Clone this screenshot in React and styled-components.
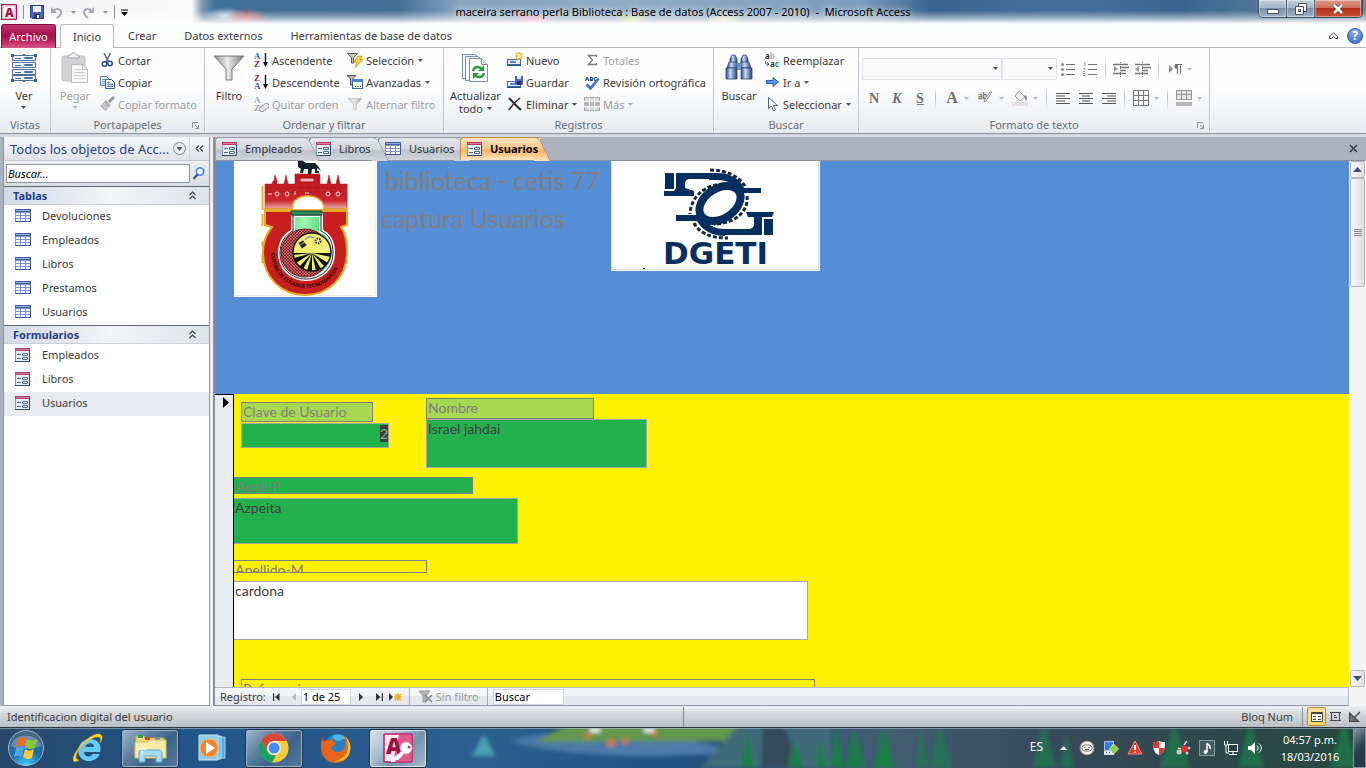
import React, { useEffect, useRef, useState } from "react";
import styled, { createGlobalStyle, css } from "styled-components";

const GlobalStyle = createGlobalStyle`
  * { box-sizing: border-box; }
  html, body { margin: 0; height: 100%; overflow: hidden; }
  body { font-family: "Noto Sans", "Open Sans", sans-serif; font-size: 11px; color: #3b3b3b; }
  button, input, select, textarea { font: inherit; color: inherit; margin: 0; }
  button { background: none; border: 0; padding: 0; cursor: default; }
  svg { display: block; flex: none; }
`;

const Window = styled.div`
  display: flex;
  flex-direction: column;
  height: 100vh;
  background: #abb2be;
`;

/* ---------- title bar ---------- */

const TitleBar = styled.header`
  display: grid;
  grid-template-columns: 1fr auto 1fr;
  height: 24px;
  background:
    linear-gradient(rgba(255, 255, 255, 0) 45%, rgba(255, 255, 255, 0.45) 75%, #fff 100%),
    radial-gradient(ellipse 22px 10px at 247px 18px, #e0706c, transparent),
    radial-gradient(ellipse 22px 9px at 225px 16px, #cfd9e6, transparent),
    radial-gradient(ellipse 24px 9px at 534px 20px, #ee8fb4, transparent),
    radial-gradient(ellipse 18px 8px at 632px 20px, #cfe07a, transparent),
    radial-gradient(ellipse 20px 8px at 724px 20px, #efe9b4, transparent),
    linear-gradient(90deg, #f1f2f4 0, #fafafa 192px, #7f9ab5 202px, #40709a 215px, #466f96 400px,
      #88a5c0 460px, #8fabc5 640px, #7d9dbc 860px, #39658f 930px, #44709a 1060px, #3a6690 1180px, #6f8aa5 1366px);
`;

const QuickAccess = styled.div`
  display: flex;
  align-items: center;
  gap: 6px;
  padding-left: 1px;
`;

const QuickButton = styled.button`
  display: flex;
  align-items: center;
  gap: 8px;
`;

const ThinRule = styled.span`
  width: 1px;
  height: 14px;
  background: #8d929b;
`;

const WindowTitle = styled.h1`
  margin: 0;
  font-size: 11px;
  font-weight: 400;
  line-height: 24px;
  color: #000;
  white-space: pre;
  text-shadow: 0 0 6px #ffffffc0, 0 0 8px #ffffffa0;
`;

const Caption = styled.div`
  display: flex;
  justify-self: end;
  height: 18px;
  margin-right: 3px;
  border: 1px solid #3d4e60;
  border-top: 0;
  border-radius: 0 0 5px 5px;
  overflow: hidden;
`;

const CaptionButton = styled.button`
  display: grid;
  place-items: center;
  width: ${(p) => (p.$close ? 47 : 28)}px;
  border-right: 1px solid #4b5e72;
  background: ${(p) =>
    p.$close
      ? "linear-gradient(#dd9c8c 0, #cf6f58 45%, #b62f18 50%, #cc5232 100%)"
      : "linear-gradient(#c3cfdb 0, #a7b7c8 45%, #7b90a6 50%, #a4b6c8 100%)"};
  box-shadow: inset 0 0 0 1px #ffffff60;
`;

/* ---------- ribbon ---------- */

const TabStrip = styled.nav`
  display: flex;
  height: 24px;
  padding-left: 1px;
  background: linear-gradient(#fbfcfd, #fff);
  border-bottom: 1px solid #b4b8bf;
`;

const RibbonTab = styled.button`
  height: 24px;
  padding: 0 14px;
  line-height: 21px;
  ${(p) =>
    p.$kind === "file" &&
    css`
      width: 55px;
      padding: 0;
      margin-right: 4px;
      color: #fff;
      border: 1px solid #8a0a3c;
      border-bottom: 0;
      border-radius: 3px 3px 0 0;
      background: linear-gradient(#b8386c 0, #a80c4c 45%, #b5124f 60%, #d6588a 100%);
    `}
  ${(p) =>
    p.$kind === "active" &&
    css`
      width: 54px;
      padding: 0;
      background: #fff;
      border: 1px solid #b4b8bf;
      border-bottom: 0;
      border-radius: 3px 3px 0 0;
    `}
`;

const TabText = styled.span`
  display: block;
  height: 22px;
`;

const StripEnd = styled.div`
  display: flex;
  align-items: center;
  gap: 9px;
  margin-left: auto;
  padding-right: 3px;
`;

const HelpButton = styled.button`
  width: 16px;
  height: 16px;
  border-radius: 50%;
  border: 1px solid #2c5db0;
  background: radial-gradient(circle at 50% 25%, #8db4ef, #2f63c4);
  color: #fff;
  font-size: 12px;
  font-weight: 700;
  line-height: 13px;
`;

const Ribbon = styled.section`
  display: flex;
  height: 86px;
  background: linear-gradient(#fff 0, #fdfdfe 45%, #f0f2f5 80%, #e6e9ee 100%);
  border-bottom: 1px solid #8d939e;
`;

const Group = styled.div`
  display: flex;
  flex-direction: column;
  padding: 1px 2px 0;
  width: ${(p) => p.$width}px;
  border-right: 1px solid #c3c7ce;
  box-shadow: 1px 0 0 #fff;
`;

const GroupBody = styled.div`
  display: flex;
  height: 67px;
`;

const GroupFooter = styled.div`
  position: relative;
  line-height: 17px;
  text-align: center;
  color: #686d7c;
`;

const Launcher = styled.button`
  position: absolute;
  right: 3px;
  top: 6px;
`;

const LargeButton = styled.button`
  display: flex;
  flex-direction: column;
  align-items: center;
  gap: 5px;
  width: ${(p) => p.$width || 44}px;
  padding-top: 3px;
  line-height: 13px;
  color: ${(p) => (p.disabled ? "#a0a0a0" : "inherit")};
`;

const LargeLabel = styled.span`
  display: flex;
  flex-direction: column;
  align-items: center;
  gap: ${(p) => (p.$arrow ? 4 : 0)}px;
`;

const SmallButton = styled.button`
  display: flex;
  align-items: center;
  gap: 3px;
  height: 22px;
  padding-left: 2px;
  white-space: nowrap;
  color: ${(p) => (p.disabled ? "#a0a0a0" : "inherit")};
`;

const SmallLabel = styled.span`
  display: flex;
  align-items: center;
  gap: 4px;
`;

const Column = styled.div`
  width: ${(p) => (p.$width ? p.$width + "px" : "auto")};
`;

const FormatTools = styled.div`
  padding: 2px 0 0 1px;
`;

const FormatRow = styled.div`
  display: flex;
  align-items: center;
  height: ${(p) => p.$height}px;
`;

const ComboBox = styled.span`
  position: relative;
  width: ${(p) => p.$width}px;
  svg { position: absolute; right: 4px; top: 9px; }
`;

const ComboSelect = styled.select`
  display: block;
  appearance: none;
  width: 100%;
  height: 22px;
  border: 1px solid #dfe2e8;
  background: #fafafa;
  opacity: 1;
`;

const FormatButton = styled.button`
  display: flex;
  align-items: center;
  justify-content: center;
  gap: 5px;
  width: ${(p) => p.$width || 23}px;
  height: 22px;
`;

const FormatRule = styled.span`
  width: 1px;
  height: 20px;
  margin: 0 4px;
  background: linear-gradient(#eee, #b9bec8, #eee);
`;

/* ---------- work area ---------- */

const WorkArea = styled.main`
  flex: 1;
  display: flex;
  min-height: 0;
  padding-left: 3px;
  border-top: 3px solid #d5d8de;
`;

const NavPane = styled.aside`
  width: 207px;
  flex: none;
  background: #fff;
  border: 1px solid #8f959f;
  border-width: 0 1px 1px 1px;
`;

const NavHeader = styled.div`
  display: flex;
  align-items: center;
  height: 24px;
  padding-left: 6px;
  color: #1f4290;
  white-space: nowrap;
  background: linear-gradient(#f7f8fa, #dfe3e9);
  border-bottom: 1px solid #c5cad2;
`;

const NavTitle = styled.h2`
  margin: 0;
  flex: 1;
  font-size: 13px;
  font-weight: 400;
`;

const NavToggle = styled.button`
  display: grid;
  place-items: center;
  width: 20px;
  height: 22px;
  border-left: ${(p) => (p.$ruled ? "1px solid #d5d9df" : "0")};
`;

const NavSearch = styled.div`
  display: flex;
  align-items: center;
  gap: 2px;
  height: 25px;
  padding: 0 4px 0 2px;
  background: linear-gradient(#eef0f3, #d9dde3);
`;

const SearchInput = styled.input`
  flex: 1;
  min-width: 0;
  height: 19px;
  padding: 0 1px;
  border: 1px solid #8f959f;
  background: #fff;
  font-style: italic;
  &::placeholder { color: #000; opacity: 1; }
`;

const NavGroupHeader = styled.button`
  display: flex;
  align-items: center;
  justify-content: space-between;
  width: 100%;
  height: 19px;
  padding: 0 12px 0 9px;
  border-top: 1px solid #62666e;
  border-bottom: 1px solid #ccd1da;
  background: linear-gradient(90deg, #d3d9e6, #f3f4f5 52%, #dfe3eb);
  font-weight: 700;
  color: #1f4290;
`;

const NavList = styled.ul`
  list-style: none;
  margin: 0;
  padding: 0;
`;

const NavItem = styled.a`
  display: grid;
  grid-template-columns: 27px 1fr;
  align-items: center;
  height: 24px;
  padding: 0 0 3px 11px;
  color: inherit;
  text-decoration: none;
  background: ${(p) => (p.$selected ? "#e8ebef" : "transparent")};
`;

const Splitter = styled.div`
  width: 5px;
  flex: none;
  background: linear-gradient(90deg, #eceef2 3px, #8a9099 3px);
`;

const Document = styled.section`
  flex: 1;
  display: flex;
  flex-direction: column;
  min-width: 0;
`;

const DocTabs = styled.div`
  display: flex;
  align-items: flex-end;
  height: 24px;
  border-bottom: 1px solid #8b919b;
`;

const DocTab = styled.button`
  position: relative;
  z-index: ${(p) => (p.$active ? 5 : p.$order)};
  display: flex;
  align-items: center;
  gap: 8px;
  width: ${(p) => p.$width}px;
  height: 23px;
  padding: 0 0 1px 6px;
  border: 1px solid ${(p) => (p.$active ? "#c18a4b" : "#9299a4")};
  border-width: 1px 0 0 1px;
  border-radius: 4px 0 0 0;
  font-weight: ${(p) => (p.$active ? 700 : 400)};
  color: ${(p) => (p.$active ? "#000" : "#333")};
  --fill: ${(p) =>
    p.$active
      ? "linear-gradient(#fde3c2 0, #fbc98c 45%, #f8b25c 55%, #fde6c6 100%)"
      : "linear-gradient(#e3e6ea 0, #d3d7dc 50%, #bec4cc 55%, #cfd4da 100%)"};
  background: var(--fill);
  &::after {
    content: "";
    position: absolute;
    z-index: -1;
    top: -1px;
    right: -5px;
    width: 16px;
    height: 23px;
    background: var(--fill);
    border: 1px solid ${(p) => (p.$active ? "#c18a4b" : "#9299a4")};
    border-width: 1px 1px 0 0;
    border-radius: 0 6px 0 0;
    transform: skewX(26deg);
  }
`;

const CloseDocument = styled.button`
  margin: 0 8px 7px auto;
`;

const FormView = styled.div`
  flex: 1;
  display: flex;
  min-height: 0;
`;

const FormColumn = styled.div`
  flex: 1;
  display: flex;
  flex-direction: column;
  min-width: 0;
`;

const FormHeader = styled.div`
  display: flex;
  align-items: flex-start;
  height: 233px;
  flex: none;
  padding-left: 19px;
  background: #558ed5;
`;

const FormTitles = styled.div`
  width: 234px;
  padding-left: 4px;
  font-family: Lato, sans-serif;
  font-size: 25px;
  line-height: 38px;
  color: #7f7f7f;
  white-space: nowrap;
`;

const FormTitle = styled.div`
  padding-left: ${(p) => (p.$indent ? 4 : 0)}px;
`;

const Detail = styled.div`
  flex: 1;
  display: flex;
  min-height: 0;
  overflow: hidden;
  background: #fff200;
`;

const RecordSelector = styled.div`
  width: 19px;
  flex: none;
  padding: 2px 0 0 8px;
  background: #e8ebf0;
  border: 1px solid #000;
  border-width: 1px 1px 0 0;
`;

const Fields = styled.form`
  flex: 1;
  overflow: hidden;
  font-family: Lato, sans-serif;
  font-size: 14px;
  line-height: 18px;
`;

const FieldPair = styled.div`
  display: flex;
  gap: 37px;
  padding: 4px 0 0 7px;
  margin-bottom: 9px;
`;

const Field = styled.div`
  display: flex;
  flex-direction: column;
  gap: ${(p) => p.$gap || 0}px;
  padding: ${(p) => p.$pad || "0"};
`;

const FieldLabel = styled.label`
  display: block;
  width: ${(p) => p.$width}px;
  height: ${(p) => p.$height}px;
  padding-left: 1px;
  overflow: hidden;
  color: #7f7f7f;
  background: ${(p) => p.$fill || "transparent"};
  border: 1px solid #7f7f7f;
  border-left-width: ${(p) => (p.$flush ? 0 : 1)}px;
`;

const fieldBox = css`
  display: block;
  width: ${(p) => p.$width}px;
  height: ${(p) => p.$height}px;
  padding: 0 1px;
  color: #404040;
  background: ${(p) => p.$fill || "#fff"};
  border: 1px solid #a5a5a5;
  border-left-width: ${(p) => (p.$flush ? 0 : 1)}px;
  border-radius: 0;
  outline: 0;
  resize: none;
`;

const KeyInput = styled.input`
  ${fieldBox}
  padding: 0 0 5px;
  text-align: right;
  caret-color: transparent;
  &::selection { background: #404040; color: #7fb98c; }
`;

const TextBox = styled.textarea`
  ${fieldBox}
  overflow: hidden;
`;

const ScrollBar = styled.div`
  display: flex;
  flex-direction: column;
  width: 17px;
  flex: none;
  padding: 0 0 0 1px;
  background: #f5f5f6;
`;

const ScrollButton = styled.button`
  display: grid;
  place-items: center;
  width: 15px;
  height: ${(p) => p.$height || 17}px;
  border: 1px solid #b3b6bb;
  border-radius: 2px;
  background: linear-gradient(90deg, #fafafa, #dedede);
  margin-top: ${(p) => (p.$last ? "auto" : "0")};
`;

const RecordFooter = styled.div`
  flex: none;
  padding-right: 17px;
  background: #f5f5f6;
`;

const RecordBar = styled.div`
  display: flex;
  align-items: center;
  height: 19px;
  padding-left: 5px;
  border: 1px solid #b6bac2;
  border-width: 1px 1px 1px 0;
  border-bottom-color: #8f98a6;
  background: linear-gradient(#f4f5f7 50%, #e5e8ec 50%);
`;

const RecordButton = styled.button`
  display: grid;
  place-items: center;
  width: ${(p) => p.$width || 17}px;
`;

const RecordInput = styled.input`
  width: ${(p) => p.$width}px;
  height: 16px;
  padding: 0 1px;
  border: 1px solid #d5d8dd;
  background: #fff;
  color: #000;
`;

const FilterState = styled.button`
  display: flex;
  align-items: center;
  gap: 3px;
  height: 17px;
  padding: 0 8px;
  margin: 0 5px;
  border: 1px solid #a9adb5;
  border-width: 0 1px;
  color: #9b9b9b;
`;

/* ---------- status bar ---------- */

const StatusBar = styled.footer`
  display: flex;
  align-items: center;
  height: 22px;
  flex: none;
  background: linear-gradient(#eef0f3, #d3d6da 40%, #bcc1c6);
  border-bottom: 1px solid #30363d;
`;

const StatusText = styled.span`
  width: 50%;
  padding-left: 7px;
`;

const StatusRight = styled.div`
  display: flex;
  align-items: center;
  justify-content: flex-end;
  flex: 1;
  height: 20px;
  border-left: 1px solid #7f858d;
  padding-right: 2px;
`;

const ViewRule = styled.span`
  width: 1px;
  height: 20px;
  margin: 0 4px 0 9px;
  background: #8b9098;
`;

const ViewButton = styled.button`
  display: grid;
  place-items: center;
  width: 19px;
  height: 19px;
  border-radius: 2px;
  ${(p) =>
    p.$active &&
    css`
      border: 1px solid #c28a30;
      background: linear-gradient(#fbe3a0, #fdd667);
    `}
`;

/* ---------- taskbar ---------- */

const Taskbar = styled.div`
  position: relative;
  display: flex;
  align-items: center;
  height: 40px;
  flex: none;
  overflow: hidden;
  background: #234f7e;
  color: #fff;
`;

const Scenery = styled.svg`
  position: absolute;
  inset: 0;
  width: 100%;
  height: 100%;
`;

const TaskList = styled.div`
  position: relative;
  display: flex;
  align-items: center;
  gap: 4px;
  padding-left: 7px;
`;

const StartButton = styled.button`
  width: 48px;
`;

const TaskButton = styled.button`
  display: grid;
  place-items: center;
  width: 58px;
  height: 39px;
  border-radius: 3px;
  ${(p) =>
    p.$state &&
    css`
      border: 1px solid #1b2f45;
      box-shadow: inset 0 0 0 1px ${p.$state === "active" ? "#dbe6f0" : "#9db4c9"};
      background: ${p.$state === "active"
        ? "linear-gradient(135deg, #d8e2ec 0, #a9bfd3 35%, #7592ae 60%, #a7bccf 100%)"
        : "linear-gradient(135deg, #a3b8cb 0, #5d7f9f 35%, #3c658b 60%, #56799b 100%)"};
    `}
`;

const Tray = styled.div`
  position: relative;
  display: flex;
  align-items: center;
  gap: 8px;
  margin-left: auto;
  height: 40px;
`;

const Language = styled.button`
  padding-bottom: 4px;
  margin-right: 4px;
  font-size: 12px;
`;

const TrayButton = styled.button`
  display: grid;
  place-items: center;
  width: 16px;
`;

const Clock = styled.button`
  width: 82px;
  padding-right: 4px;
  line-height: 17px;
`;

const ShowDesktop = styled.button`
  width: 13px;
  height: 40px;
  margin-left: -8px;
  border: 1px solid #8796a3;
  background: linear-gradient(135deg, #8296a3, #2b3f4d 50%, #22343f);
`;

/* ---------- drawings ---------- */

const Svg = ({ w = 16, h = 16, box, children }) => (
  <svg width={w} height={h} viewBox={box || `0 0 ${w} ${h}`} fill="none" aria-hidden="true">
    {children}
  </svg>
);

const Arrow = ({ color = "#555" }) => (
  <Svg w={5} h={3}>
    <path d="M0 0h5L2.500 3z" fill={color} />
  </Svg>
);

const FormIcon = () => (
  <Svg w={15} h={14}>
    <rect x=".5" y=".5" width="14" height="13" fill="#e9eff8" stroke="#8296b8" />
    <path d="M0 0h15v3H0z" fill="#b93a6b" />
    <path d="M1 1.500h13" stroke="#d77a9d" />
    <path d="M14.500 3v10.500H0" stroke="#2c4a6e" />
    <path d="M2 6.500h4M2 10.500h4" stroke="#4a6792" />
    <path d="M7.500 5.500h5v2h-5zM7.500 9.500h5v2h-5z" stroke="#4a6792" fill="#fff" />
  </Svg>
);

const TableIcon = () => (
  <Svg w={16} h={13}>
    <rect width="16" height="13" fill="#7d97c3" />
    <path d="M0 0h16v3H0z" fill="#4468a6" />
    <path d="M1 4h4v2H1zM6 4h4v2H6zM11 4h4v2h-4zM1 7h4v2H1zM6 7h4v2H6zM11 7h4v2h-4zM1 10h4v2H1zM6 10h4v2H6zM11 10h4v2h-4z" fill="#f4f7fc" />
    <path d="M1 1.500h14" stroke="#8eabd8" />
    <path d="M15.500 2v10.500H0" stroke="#3d5788" />
  </Svg>
);

const AccessMark = () => (
  <Svg w={16} h={16}>
    <rect x=".5" y=".5" width="15" height="15" rx="1" fill="#fbeef3" stroke="#a51d50" strokeWidth="1.500" />
    <rect x="2" y="2" width="12" height="12" fill="#fff" stroke="#e7a9c1" />
    <text x="4" y="13" fontSize="12" fontWeight="900" fill="#a3124a">A</text>
  </Svg>
);

const SaveIcon = () => (
  <Svg w={14} h={14}>
    <path d="M.5.5h13v13H2L.500 12z" fill="#4a63c0" stroke="#2b3e8e" />
    <path d="M3 1h8v6H3z" fill="#e8eefb" />
    <path d="M4 9h6v5H4z" fill="#28367a" />
    <path d="M7 10h2v3H7z" fill="#fff" />
  </Svg>
);

const UndoIcon = ({ flip }) => (
  <Svg w={13} h={13}>
    <g transform={flip ? "matrix(-1 0 0 1 13 0)" : undefined}>
      <path d="M1 1v6h6z" fill="#a3a9b3" />
      <path d="M3.500 5C6 2 11 2.500 11 6.500c0 2.500-2 4-4 5.500" stroke="#a3a9b3" strokeWidth="2" />
    </g>
  </Svg>
);

const ViewFormIcon = () => (
  <Svg w={32} h={32} box="-2 -1 32 32">
    <g fill="#eef3fa" stroke="#4d6b9b">
      <path d="M2.500 2.500h23v5h-23zM2.500 9.500h23v5h-23zM2.500 16.500h23v5h-23zM2.500 22.500h23v5h-23z" />
      <path d="M14.500 4.500h8v1h-8zM14.500 11.500h8v1h-8zM14.500 18.500h8v1h-8zM14.500 24.500h8v1h-8z" fill="#fff" />
      <path d="M5 5.500h6M5 12.500h6M5 19.500h6M5 25.500h6" />
    </g>
    <path d="M1 1h3v3H1zM24 1h3v3h-3zM1 26h3v3H1zM24 26h3v3h-3zM13 1h2v2h-2zM13 27h2v2h-2z" fill="#3d5f97" />
  </Svg>
);

const PasteIcon = () => (
  <Svg w={28} h={32}>
    <rect x="1" y="4" width="23" height="25" rx="2" fill="#d3d3d6" stroke="#c2c2c6" />
    <path d="M7 6V4c0-1 1-1 3-1 0-3 5-3 5 0 2 0 3 0 3 1v2z" fill="#f2f2f2" stroke="#a8a8ac" />
    <path d="M10.500 12.500h11l5 5v13h-16z" fill="#f6f6f7" stroke="#bdbdc2" />
    <path d="M21.500 12.500v5h5" stroke="#bdbdc2" />
    <path d="M13 17.500h7M13 20.500h11M13 23.500h11M13 26.500h11" stroke="#d0d0d4" />
  </Svg>
);

const CutIcon = () => (
  <Svg>
    <path d="M5 1l4.500 9M11.500 1L7 10" stroke="#5b6b85" strokeWidth="1.600" />
    <circle cx="5.500" cy="12" r="2.300" stroke="#2b4fa0" strokeWidth="1.600" />
    <circle cx="11" cy="11.500" r="2.200" stroke="#2b4fa0" strokeWidth="1.600" />
  </Svg>
);

const CopyIcon = () => (
  <Svg>
    <path d="M1.500 2.500h6l2 2v7h-8z" fill="#f1f5fc" stroke="#5b7cb8" />
    <path d="M3 5.500h4M3 7.500h4M3 9.500h3" stroke="#7f9bd0" />
    <path d="M6.500 5.500h6l3 3v6h-9z" fill="#e7effc" stroke="#385fa8" />
    <path d="M8 8.500h3M8 10.500h6M8 12.500h6" stroke="#4f76bf" />
  </Svg>
);

const BrushIcon = () => (
  <Svg>
    <path d="M15 1l-5 5" stroke="#9a9a9a" strokeWidth="3" />
    <path d="M7 4l5 5-2 2-5-5zM5 6l5 5-3 4-6-5z" fill="#b3b3b3" />
    <path d="M3 8l4 5M5 7l4 5" stroke="#e0e0e0" />
  </Svg>
);

const Funnel = ({ w = 16, h = 16, dim }) => (
  <Svg w={w} h={h} box="0 0 32 30">
    <defs>
      <linearGradient id={dim ? "funnelDim" : "funnel"}>
        <stop offset="0" stopColor={dim ? "#c5c5c5" : "#8a8a8a"} />
        <stop offset=".45" stopColor="#ececec" />
        <stop offset="1" stopColor={dim ? "#999" : "#777"} />
      </linearGradient>
    </defs>
    <path d="M1 3h30L19 16v11h-6V16z" fill={`url(#${dim ? "funnelDim" : "funnel"})`} stroke={dim ? "#aaa" : "#7a7a7a"} />
  </Svg>
);

const SortIcon = ({ top, bottom, topFill, bottomFill }) => (
  <Svg>
    <g fontFamily="Liberation Serif, serif" fontWeight="700" fontSize="9">
      <text x="1" y="7" fill={topFill}>{top}</text>
      <text x="1" y="15" fill={bottomFill}>{bottom}</text>
    </g>
    <path d="M12.500 1v10" stroke="#111" strokeWidth="1.400" />
    <path d="M10 10h5l-2.500 5z" fill="#111" />
  </Svg>
);

const ClearSortIcon = () => (
  <Svg>
    <g fontFamily="Liberation Serif, serif" fontWeight="700" fontSize="9" fill="#a6a6a6">
      <text x="1" y="7">A</text>
      <text x="1" y="15">Z</text>
    </g>
    <rect x="6" y="9" width="10" height="5" rx="2" transform="rotate(-35 11 11)" fill="#eee" stroke="#9f9f9f" />
  </Svg>
);

const SelectionIcon = () => (
  <Svg>
    <path d="M.500 1.500h10L6.500 6v5h-2V6z" fill="#c9c9c9" stroke="#555" />
    <path d="M11 4h4l-2 3.500h3l-8 8 2-5.500H7z" fill="#ffd23c" stroke="#d88a13" strokeWidth=".800" />
  </Svg>
);

const AdvancedIcon = () => (
  <Svg>
    <path d="M0 1.500h9L5.500 5v6h-2V5z" fill="#b9b9b9" stroke="#555" />
    <rect x="5.500" y="5.500" width="10" height="9" fill="#fff" stroke="#3a68b5" />
    <path d="M5 5h11v3H5z" fill="#4a80d0" />
    <path d="M8 12.500h1M10.500 12.500h1M13 12.500h1" stroke="#333" />
  </Svg>
);

const RefreshIcon = () => (
  <Svg w={32} h={32} box="-1 -1 32 32">
    <g fill="#f6f8fc" stroke="#7d8fae">
      <path d="M1.500 1.500h13l4 4v20h-17z" />
      <path d="M4.500 3.500h13l4 4v20h-17z" />
      <path d="M8.500 5.500h12l6 6v17h-18z" fill="#fff" />
    </g>
    <path d="M20.500 5.500v6h6" stroke="#7d8fae" fill="#dfe6f2" />
    <path d="M12 18c1-5 7-5 9-2M23 20c-1 5-7 5-9 2" stroke="#2e9c3c" strokeWidth="2.400" />
    <path d="M23 12v6h-6zM12 26v-6h6z" fill="#2e9c3c" />
  </Svg>
);

const RecordIcon = ({ save }) => (
  <Svg>
    <rect x=".5" y="7.500" width="13" height="5" fill="#eaf1fc" stroke="#4467ac" />
    <path d="M3 10h6" stroke="#5c85cc" strokeWidth="2" />
    <path d="M0 13.500h14" stroke="#2c4c8c" />
    {save ? (
      <g>
        <path d="M8 2h8v9H9L8 10z" fill="#5263bb" />
        <path d="M10 2h4v3h-4z" fill="#e9eefb" />
        <path d="M10 7h4v4h-4z" fill="#252f70" />
      </g>
    ) : (
      <g stroke="#f0b323" strokeWidth="1.500">
        <path d="M12 0v8M8 4h8M9 1l6 6M15 1L9 7" />
        <circle cx="12" cy="4" r="2" fill="#fff7c4" stroke="none" />
      </g>
    )}
  </Svg>
);

const DeleteIcon = () => (
  <Svg>
    <path d="M2 2c4 4 7 8 12 12" stroke="#2c2c2c" strokeWidth="2" />
    <path d="M13 2C9 5 5 9 2 14" stroke="#2c2c2c" strokeWidth="1.500" />
  </Svg>
);

const SigmaIcon = () => (
  <Svg>
    <path d="M12.500 5V3.500h-8L8.500 8l-4 4.500h8V11" stroke="#7b7b7b" strokeWidth="1.400" />
  </Svg>
);

const SpellIcon = () => (
  <Svg>
    <text x="1" y="7" fontSize="6" fontWeight="700" fill="#222">ABC</text>
    <path d="M2.500 10.500l4 4L14.500 4.500" stroke="#3d6fd0" strokeWidth="2.600" />
  </Svg>
);

const MoreIcon = () => (
  <Svg>
    <rect x=".5" y="1.500" width="15" height="13" fill="#ddd" stroke="#a6a6a6" />
    <path d="M0 6h16v4H0z" fill="#b5b5b5" />
    <path d="M5.500 2v13M10.500 2v13M0 5.500h16M0 10.500h16" stroke="#f5f5f5" />
  </Svg>
);

const Binoculars = () => (
  <Svg w={32} h={32} box="-2 -2 32 32">
    <defs>
      <linearGradient id="barrel">
        <stop offset="0" stopColor="#2e4a86" />
        <stop offset=".4" stopColor="#c8d9f5" />
        <stop offset="1" stopColor="#27427c" />
      </linearGradient>
    </defs>
    <g fill="url(#barrel)" stroke="#2f4678" strokeWidth=".800">
      <path d="M7 1h3l2 4v4H5V5z" />
      <path d="M18 1h3l2 4v4h-7V5z" />
      <path d="M4 8h8l1 6H2z" />
      <path d="M16 8h8l2 6H15z" />
      <path d="M1 14h11v11H1z" />
      <path d="M16 14h11v11H16z" />
    </g>
    <path d="M12 9h4v7h-4z" fill="#6e8fc9" />
  </Svg>
);

const ReplaceIcon = () => (
  <Svg>
    <g fontSize="8" fontWeight="700">
      <text x="1" y="7"><tspan fill="#333">a</tspan><tspan fill="#b5b5b5">b</tspan></text>
      <text x="6" y="15"><tspan fill="#333">a</tspan><tspan fill="#1f9a38">c</tspan></text>
    </g>
    <path d="M1.500 9v3h3M3 10l2 2-2 2" stroke="#3e6cc0" />
  </Svg>
);

const GoToIcon = () => (
  <Svg>
    <path d="M2.500 6.500H9V3.500L14.500 8 9 12.500v-3H2.500z" fill="#5b92e6" stroke="#2c5fb5" />
  </Svg>
);

const CursorIcon = () => (
  <Svg>
    <path d="M4.500 1.500v11l3-2.500 2 5 2-1-2-4.500h4z" fill="#fff" stroke="#4d6692" />
  </Svg>
);

const ListIcon = ({ numbered }) => (
  <Svg w={14} h={14}>
    <path d="M5 2.500h9M5 7.500h9M5 12.500h9" stroke="#707070" />
    {numbered ? (
      <path d="M1 .5h1v3M0 6.500h2v1H1M0 9.500h2M0 11.500h2v2H0" stroke="#999" />
    ) : (
      <g fill="#8b8b8b">
        <circle cx="1.500" cy="2.500" r="1.500" />
        <circle cx="1.500" cy="7.500" r="1.500" />
        <circle cx="1.500" cy="12.500" r="1.500" />
      </g>
    )}
  </Svg>
);

const IndentIcon = ({ out }) => (
  <Svg w={16} h={15}>
    <path d="M0 2.500h15M7 5.500h9M7 8.500h6M0 11.500h13" stroke="#777" strokeWidth="1.500" />
    <path d="M7.500 0v15" stroke="#777" strokeDasharray="1 1" />
    <path d={out ? "M0 7l4-3v6z" : "M5 7L1 4v6z"} fill="#999" />
  </Svg>
);

const PilcrowIcon = () => (
  <Svg w={13} h={10}>
    <path d="M0 1l4 4-4 4z" fill="#888" />
    <path d="M8.500 1v9M11.500 1v9M6 .5h7" stroke="#777" />
    <path d="M9 0H8a2.500 2.500 0 000 5h1z" fill="#777" />
  </Svg>
);

const FormatLetter = ({ letter, italic, underline, size = 14 }) => (
  <Svg w={14} h={16}>
    <text x="7" y="13" textAnchor="middle" fontFamily="Liberation Serif, serif" fontWeight="700" fontSize={size}
      fontStyle={italic ? "italic" : "normal"} fill="#6e6e6e">{letter}</text>
    {underline && <path d="M4 14.500h7" stroke="#7a7a7a" />}
  </Svg>
);

const HighlightIcon = () => (
  <Svg w={16} h={14}>
    <path d="M0 1h9v8H0z" fill="#ddd" />
    <text x="0" y="8" fontSize="8" fill="#555">ab</text>
    <path d="M14 1L8 10l-2 1 1-3 5-7z" fill="#eee" stroke="#999" />
  </Svg>
);

const BucketIcon = () => (
  <Svg w={16} h={16}>
    <path d="M7 1l6 6-5 4-5-5z" fill="#eee" stroke="#999" />
    <path d="M13 5c3 1 2 5 1 6-1-2-2-4-1-6z" fill="#888" />
    <path d="M0 12h16v4H0z" fill="#e6e0e3" />
  </Svg>
);

const AlignIcon = ({ lines }) => (
  <Svg w={14} h={11}>
    <path d={lines} stroke="#555" />
  </Svg>
);

const GridIcon = () => (
  <Svg w={16} h={16}>
    <path d="M.5.5h15v15H.500zM5.500.500v15M10.500.500v15M.500 5.500h15M.500 10.500h15" stroke="#777" />
  </Svg>
);

const RowColorIcon = () => (
  <Svg w={16} h={16}>
    <rect x=".5" y=".5" width="15" height="9" fill="#e3e3e3" stroke="#999" />
    <path d="M5.500 0v9M10.500 0v9M0 4.500h16" stroke="#999" />
    <path d="M0 12h16v4H0z" fill="#b9b5b7" />
  </Svg>
);

const LauncherIcon = () => (
  <Svg w={7} h={7}>
    <path d="M.5 6V.5H6M3 3l3 3M6.500 3v3.500H3" stroke="#8f949e" />
  </Svg>
);

const DoubleChevron = ({ left }) => (
  <Svg w={9} h={9}>
    <g transform={left ? "rotate(-90 4.500 4.500)" : undefined}>
      <path d="M1.500 4l3-3 3 3M1.500 8l3-3 3 3" stroke="#444" strokeWidth="1.200" />
    </g>
  </Svg>
);

const Magnifier = () => (
  <Svg w={13} h={13}>
    <circle cx="8" cy="4.500" r="3.700" fill="#e3f1fd" stroke="#3f87cf" strokeWidth="1.600" />
    <path d="M5.500 7.500L1.500 12" stroke="#2a4f97" strokeWidth="2" />
  </Svg>
);

const CrossIcon = () => (
  <Svg w={9} h={9}>
    <path d="M1 1l7 7M8 1L1 8" stroke="#3a3f47" strokeWidth="1.600" />
  </Svg>
);

const SchoolCrest = () => (
  <Svg w={143} h={136}>
    <defs>
      <linearGradient id="flask">
        <stop offset="0" stopColor="#2fd873" />
        <stop offset=".45" stopColor="#a2f7b4" />
        <stop offset="1" stopColor="#23c865" />
      </linearGradient>
      <linearGradient id="wall" x2="0" y2="1">
        <stop offset="0" stopColor="#c0141c" />
        <stop offset=".75" stopColor="#c9262c" />
        <stop offset="1" stopColor="#eeb0b0" />
      </linearGradient>
      <pattern id="hatch" width="3" height="3" patternUnits="userSpaceOnUse">
        <rect width="3" height="3" fill="#8d1a20" />
        <path d="M0 0l3 3M3 0L0 3" stroke="#d6aaaa" strokeWidth=".500" />
      </pattern>
      <path id="arcOuter" d="M37 92a35 35 0 0070 0" />
    </defs>
    <rect width="143" height="136" fill="#fff" />
    <path d="M0 134.500h141V0" stroke="#e6e6e6" />
    <path d="M64 0h5l3 2h9l3 3 3 5-4-3v3h2v2h-4V8h-3l-1 6h-3V8h-4l-1 4h-3l1-4-3-2z" fill="#10232a" />
    <path d="M31 23h7l1-3h1l1-6 2 6v3h7l2-9 2 9h7V13h25v10h7l2-9 2 9h5l2-9 2 9h7v25H31z" fill="url(#wall)" stroke="#b3161d" strokeWidth=".500" />
    <path d="M66 17h14v4H66z" fill="#f4b4b9" stroke="#a30f18" />
    <path d="M32 27h80M32 31h80" stroke="#a30f18" strokeDasharray="6 2" strokeWidth=".600" />
    <g stroke="#f6d5d7" strokeWidth="1">
      <circle cx="43" cy="33" r="2" />
      <circle cx="53" cy="33" r="2" />
      <circle cx="94" cy="33" r="2" />
      <circle cx="104" cy="33" r="2" />
      <path d="M34 33h4M61 30v4M71 32h4" />
    </g>
    <path d="M58 49V46c1-15 30-15 32 0v3z" fill="#fff" stroke="#e4a21c" strokeWidth="1.500" />
    <path d="M28 48h30M90 48h24" stroke="#e4a21c" strokeWidth="1.500" />
    <path d="M28.500 25v23M28.500 53v12M28.500 80v6M28.500 93v9" stroke="#eab22a" strokeWidth="2" />
    <path d="M31 50h82v14l-6 2c4 6 6 15 6 25 0 25-18 43-42 43S29 116 29 91c0-10 4-19 9-25l-7-2z" fill="#c71f1d" stroke="#e8a91f" strokeWidth="2" />
    <path d="M59 54h28v16c9 4 12 12 12 22 0 15-12 26-27 26S46 107 46 92c0-10 5-18 13-22z" fill="url(#flask)" stroke="#fff" strokeWidth="4" />
    <path d="M59 54h28v16c9 4 12 12 12 22 0 15-12 26-27 26S46 107 46 92c0-10 5-18 13-22z" stroke="#222" />
    <circle cx="71" cy="92" r="24" fill="url(#hatch)" stroke="#7b1015" />
    <path d="M57 50h31v4H57z" fill="#2d8a5b" stroke="#14452e" />
    <circle cx="78" cy="91" r="19" fill="#f1ee78" stroke="#151515" strokeWidth="1.500" />
    <path d="M78 92L60 97l2 5zM78 92L65 106l4 2zM78 92l-5 18h5zM78 92l4 18 5-2zM78 92l13 14 3-4zM78 92l19 4v-4zM78 92H59v2z" fill="#111" />
    <path d="M64 82l5-3 4 5-5 4zM66 84l5-3" fill="#222" stroke="#f1ee78" strokeWidth=".700" />
    <circle cx="84" cy="80" r="2.500" stroke="#333" strokeWidth="2" strokeDasharray="1.500 1" />
    <path d="M71 79c2-4 6-4 9-2" stroke="#999" strokeWidth="1.500" />
    <g fill="#2c0707" fontSize="5" fontWeight="700">
      <text>
        <textPath href="#arcOuter">CENTRO DE ESTUDIOS TECNOLOGICOS</textPath>
      </text>
    </g>
  </Svg>
);

const DgetiLogo = () => (
  <Svg w={209} h={110}>
    <rect width="209" height="110" fill="#fff" />
    <path d="M.5 110V0M207.500 0v108.500H0" stroke="#d9d9d9" />
    <g fill="#062f5f">
      <path d="M54 12h9v16h-9zM53 30h10l2-3V12h35v6H79c-3 0-5 2-5 5v4l9 3v5H53z" />
      <path d="M128 27h22v5h-20zM65 54h22l2 6H65z" />
      <path d="M135 51h28l-2 5h-10v18h-38v-6h24c4 0 6-2 6-5v-7h-6z" />
      <path d="M153 58h9v16h-9z" />
    </g>
    <g stroke="#062f5f" strokeWidth="7">
      <path d="M98 15.500h8c13 0 21 6 25 15" />
      <path d="M88 56c4 10 14 15.500 26 15.500" />
      <ellipse cx="109" cy="42.500" rx="22.500" ry="15" transform="rotate(-33 109 42.500)" strokeWidth="8" />
    </g>
    <g stroke="#14283f" strokeWidth="3" strokeDasharray="4 2">
      <path d="M99 9c16 0 28 6 35 16" />
      <path d="M112 23c-18 1-32 12-33 30" />
      <path d="M136 35c2 15-12 28-33 28" />
      <path d="M83 62c5 10 17 15 34 15" />
    </g>
    <text x="52" y="103" fontFamily="DejaVu Sans, sans-serif" fontWeight="700" fontSize="31" fill="#062f5f">DGETI</text>
    <path d="M32 107h2v1h-2z" fill="#111" />
  </Svg>
);

const StartOrb = () => (
  <Svg w={38} h={38}>
    <defs>
      <radialGradient id="orb" cx=".5" cy="1" r=".9">
        <stop offset="0" stopColor="#3ed6ff" />
        <stop offset=".5" stopColor="#1c6ca8" />
        <stop offset="1" stopColor="#456684" />
      </radialGradient>
    </defs>
    <circle cx="19" cy="19" r="17.500" fill="url(#orb)" stroke="#9ab6cc" />
    <path d="M4 17C7 3 31 3 34 17c-8 4-22 4-30 0z" fill="#ffffff40" />
    <path d="M11 10c3-2 5-2 8-1l-2 9c-3-2-6-1-8 0z" fill="#ee6a2a" />
    <path d="M20 10c3 2 6 2 10 0l-2 9c-4 2-7 1-10-1z" fill="#8cc63f" />
    <path d="M9 19c3-1 5-1 8 0l-2 9c-3-2-5-1-8 0z" fill="#4aa8ec" />
    <path d="M18 20c3 2 6 2 9 0l-2 9c-3 2-6 1-9-1z" fill="#fcc93a" />
  </Svg>
);

const ExplorerIcon = () => (
  <Svg w={32} h={32}>
    <path d="M21 22h7c-3 7-12 9-18 5-5-4-5-12 0-17 5-4 12-4 16 0 3 3 3 7 2 10H12c0 5 6 6 9 2z" fill="#66c9fa" />
    <path d="M13 15h9c0-5-7-5-9 0z" fill="#245382" />
    <path d="M7 28C0 33-1 26 6 17 13 7 25-1 29 3c2 2 1 5-1 8 1-4 1-6-2-6C20 4 9 13 5 21c-2 5-1 7 2 7z" fill="#ffd52e" stroke="#e6a614" strokeWidth=".500" />
  </Svg>
);

const FolderIcon = () => (
  <Svg w={34} h={32}>
    <path d="M3 4h8l1 2h19v18H2z" fill="#f0d67c" stroke="#c9a544" />
    <path d="M5 3h5v3H5z" fill="#2da348" />
    <path d="M12 5h5v3h-5z" fill="#d5452e" />
    <path d="M22 6h5v3h-5z" fill="#3a8ee0" />
    <path d="M2 10h12l2-2h17v18H2z" fill="#fbeaa8" stroke="#dcbc62" />
    <path d="M6 30V21c0-2 1-3 3-3h17c2 0 3 1 3 3v9h-6v-6H12v6z" fill="#a4dbf5" stroke="#5fa9cf" />
    <path d="M9 12v10M4 17h10" stroke="#fff" />
  </Svg>
);

const PlayerIcon = () => (
  <Svg w={28} h={28}>
    <path d="M9 3h18v21H9z" fill="#5aa9d8" stroke="#9bd3f0" />
    <path d="M5 2h18v23H5z" fill="#6db8e2" stroke="#b6e1f6" />
    <path d="M1 1h19v25H1z" fill="#8ecbeb" stroke="#c7e9f9" />
    <circle cx="11" cy="14" r="9" fill="#f5822a" stroke="#ffb26b" />
    <path d="M8 8v12l9-6z" fill="#fff" />
  </Svg>
);

const ChromeIcon = () => (
  <Svg w={30} h={30}>
    <circle cx="15" cy="15" r="14.500" fill="#fbc93d" />
    <path d="M2.500 7.500C8-2 22-2 27.700 8H15a7 7 0 00-6 10.500z" fill="#dc4437" />
    <path d="M2.500 7.500L9 18.500A7 7 0 0017 22l-4 7.500C1 28-3 16 2.500 7.500z" fill="#1ba261" />
    <circle cx="15" cy="15" r="7" fill="#f5f5f5" />
    <circle cx="15" cy="15" r="5.500" fill="#4a8af4" />
  </Svg>
);

const FirefoxIcon = () => (
  <Svg w={32} h={32}>
    <circle cx="17" cy="14" r="12" fill="#2c7fc0" />
    <path d="M12 5c4-4 12-3 15 3-5-3-6 1-8 1s-4-1-7-4z" fill="#53b4e8" />
    <path d="M3 5c0 2 0 3 1 4 2-1 4-1 5 0l3-3c0 3 1 4 4 5-1 3-5 3-5 5 2 5 9 5 13 1 3-4 2-10-1-14 6 3 8 10 7 15-1 9-8 13-15 13C6 31 0 22 1 13c0-3 1-6 2-8z" fill="#e8641b" />
    <path d="M26 5c5 5 6 13 2 19-4 5-10 6-14 5 8-1 14-6 14-14 0-4-1-7-2-10z" fill="#fbc42f" />
  </Svg>
);

const AccessTaskIcon = () => (
  <Svg w={30} h={30}>
    <rect x="1" y="1" width="28" height="28" rx="1" fill="#fbe5ee" stroke="#c2185b" strokeWidth="1.500" />
    <path d="M16 2h12v26H10z" fill="#dc5a8e" />
    <text x="3" y="21" fontSize="22" fontWeight="900" fill="#9c0f46">A</text>
    <circle cx="23" cy="15" r="6" fill="#fff" stroke="#e8a9c1" />
    <path d="M19 18L8 26v3h4l1-2 2 0 6-6z" fill="#fff" />
    <circle cx="26" cy="14" r="1.500" fill="#b83a6c" />
  </Svg>
);

const Landscape = () => (
  <Scenery viewBox="0 0 1366 40" preserveAspectRatio="none" aria-hidden="true">
    <defs>
      <filter id="soft" x="-10%" y="-50%" width="120%" height="200%">
        <feGaussianBlur stdDeviation="2 2" />
      </filter>
      <linearGradient id="water">
        <stop offset="0" stopColor="#28486a" />
        <stop offset=".15" stopColor="#22568a" />
        <stop offset=".35" stopColor="#2b5f90" />
        <stop offset=".5" stopColor="#215080" />
        <stop offset=".65" stopColor="#435d72" />
        <stop offset=".78" stopColor="#37485a" />
        <stop offset="1" stopColor="#24483c" />
      </linearGradient>
    </defs>
    <rect width="1366" height="40" fill="url(#water)" />
    <g filter="url(#soft)">
      <path d="M510 12c60-14 150-10 230 12-90 8-190 4-230-12z" fill="#4d7aa8" />
      <path d="M535 14L570-5h170l-14 18z" fill="#62964c" />
      <path d="M472 28l12-22 11 22z" fill="#4ba2b4" />
      <path d="M700 40l40-44h90v44z" fill="#3f6a7c" />
      <path d="M763 0c10-4 22-2 26 8l8 32h-36z" fill="#34485c" />
      <g fill="#1f7d4c">
        <path d="M740 40l7-38 8 38zM788 40l6-30 10 30zM815 40l5-34 7 34zM830 40l6-44 8 44zM845 40l9-40 12 40zM874 40l9-42 13 42z" />
        <path d="M915 40l6-40 8 40zM930 40l10-46 12 46zM1032 40l12-48 12 48zM1060 40l6-36 8 36zM1160 40l14-48 16 48zM1238 40l12-48 14 48zM1330 40l14-48 14 48z" opacity=".7" />
      </g>
      <g fill="#d9703c">
        <circle cx="588" cy="8" r="3" />
        <circle cx="611" cy="15" r="4" />
        <circle cx="625" cy="13" r="3" />
        <circle cx="654" cy="5" r="3" />
      </g>
      <path d="M590 0h10v4h-10zM644 0h10v4h-10z" fill="#fff" />
    </g>
    <path d="M0 .5h1366" stroke="#a8bccb" strokeOpacity=".6" />
  </Scenery>
);

/* ---------- data ---------- */

const GREEN = "#22b14c";
const LIME = "#a8d850";

const navGroups = [
  { title: "Tablas", Icon: TableIcon, items: ["Devoluciones", "Empleados", "Libros", "Prestamos", "Usuarios"] },
  { title: "Formularios", Icon: FormIcon, items: ["Empleados", "Libros", "Usuarios"], selected: "Usuarios" },
];

const docTabs = [
  { title: "Empleados", Icon: FormIcon, width: 94 },
  { title: "Libros", Icon: FormIcon, width: 69 },
  { title: "Usuarios", Icon: TableIcon, width: 82 },
  { title: "Usuarios", Icon: FormIcon, width: 80, active: true },
];

/* ---------- parts ---------- */

const Small = ({ icon, children, menu, disabled }) => (
  <SmallButton type="button" disabled={disabled}>
    {icon}
    <SmallLabel>
      {children}
      {menu && <Arrow color={disabled ? "#aaa" : "#555"} />}
    </SmallLabel>
  </SmallButton>
);

const RibbonGroup = ({ title, width, launcher, children }) => (
  <Group $width={width}>
    <GroupBody>{children}</GroupBody>
    <GroupFooter>
      {title}
      {launcher && (
        <Launcher type="button" aria-label={title}>
          <LauncherIcon />
        </Launcher>
      )}
    </GroupFooter>
  </Group>
);

const Tool = ({ label, menu, width, children }) => (
  <FormatButton type="button" aria-label={label} $width={width || (menu ? 34 : 23)}>
    {children}
    {menu && <Arrow color="#b5b9c0" />}
  </FormatButton>
);

const TextFormat = () => (
  <FormatTools>
    <FormatRow $height={36}>
      <ComboBox $width={140}>
        <ComboSelect aria-label="Fuente" disabled />
        <Arrow />
      </ComboBox>
      <ComboBox $width={55}>
        <ComboSelect aria-label="Tamaño de fuente" disabled />
        <Arrow />
      </ComboBox>
      <Tool label="Viñetas" width={22}><ListIcon /></Tool>
      <Tool label="Numeración" width={22}><ListIcon numbered /></Tool>
      <FormatRule />
      <Tool label="Aumentar sangría" width={22}><IndentIcon /></Tool>
      <Tool label="Disminuir sangría" width={22}><IndentIcon out /></Tool>
      <FormatRule />
      <Tool label="Dirección del texto" menu><PilcrowIcon /></Tool>
    </FormatRow>
    <FormatRow $height={22}>
      <Tool label="Negrita"><FormatLetter letter="N" /></Tool>
      <Tool label="Cursiva"><FormatLetter letter="K" italic /></Tool>
      <Tool label="Subrayado"><FormatLetter letter="S" underline /></Tool>
      <FormatRule />
      <Tool label="Color de fuente" menu><FormatLetter letter="A" size={16} /></Tool>
      <Tool label="Resaltado" menu><HighlightIcon /></Tool>
      <Tool label="Color de fondo" menu><BucketIcon /></Tool>
      <FormatRule />
      <Tool label="Izquierda"><AlignIcon lines="M0 .5h14M0 3h9M0 5.500h14M0 8h9M0 10.500h14" /></Tool>
      <Tool label="Centro"><AlignIcon lines="M0 .5h14M3 3h8M0 5.500h14M3 8h8M0 10.500h14" /></Tool>
      <Tool label="Derecha"><AlignIcon lines="M0 .5h14M5 3h9M0 5.500h14M5 8h9M0 10.500h14" /></Tool>
      <FormatRule />
      <Tool label="Cuadrícula" menu><GridIcon /></Tool>
      <FormatRule />
      <Tool label="Color de fila" menu><RowColorIcon /></Tool>
    </FormatRow>
  </FormatTools>
);

const AccessRibbon = () => (
  <Ribbon>
    <RibbonGroup title="Vistas" width={51}>
      <LargeButton type="button">
        <ViewFormIcon />
        <LargeLabel $arrow>Ver <Arrow /></LargeLabel>
      </LargeButton>
    </RibbonGroup>
    <RibbonGroup title="Portapapeles" width={154} launcher>
      <LargeButton type="button" disabled>
        <PasteIcon />
        <LargeLabel $arrow>Pegar <Arrow color="#bbb" /></LargeLabel>
      </LargeButton>
      <Column>
        <Small icon={<CutIcon />}>Cortar</Small>
        <Small icon={<CopyIcon />}>Copiar</Small>
        <Small icon={<BrushIcon />} disabled>Copiar formato</Small>
      </Column>
    </RibbonGroup>
    <RibbonGroup title="Ordenar y filtrar" width={239}>
      <LargeButton type="button">
        <Funnel w={32} h={32} />
        <LargeLabel>Filtro</LargeLabel>
      </LargeButton>
      <Column $width={94}>
        <Small icon={<SortIcon top="A" bottom="Z" topFill="#2c5fb0" bottomFill="#8e2a35" />}>Ascendente</Small>
        <Small icon={<SortIcon top="Z" bottom="A" topFill="#8e2a35" bottomFill="#2c5fb0" />}>Descendente</Small>
        <Small icon={<ClearSortIcon />} disabled>Quitar orden</Small>
      </Column>
      <Column>
        <Small icon={<SelectionIcon />} menu>Selección</Small>
        <Small icon={<AdvancedIcon />} menu>Avanzadas</Small>
        <Small icon={<Funnel dim w={16} h={14} />} disabled>Alternar filtro</Small>
      </Column>
    </RibbonGroup>
    <RibbonGroup title="Registros" width={270}>
      <LargeButton type="button" $width={59}>
        <RefreshIcon />
        <LargeLabel>
          Actualizar
          <SmallLabel>todo <Arrow /></SmallLabel>
        </LargeLabel>
      </LargeButton>
      <Column $width={77}>
        <Small icon={<RecordIcon />}>Nuevo</Small>
        <Small icon={<RecordIcon save />}>Guardar</Small>
        <Small icon={<DeleteIcon />} menu>Eliminar</Small>
      </Column>
      <Column>
        <Small icon={<SigmaIcon />} disabled>Totales</Small>
        <Small icon={<SpellIcon />}>Revisión ortográfica</Small>
        <Small icon={<MoreIcon />} menu disabled>Más</Small>
      </Column>
    </RibbonGroup>
    <RibbonGroup title="Buscar" width={145}>
      <LargeButton type="button" $width={46}>
        <Binoculars />
        <LargeLabel>Buscar</LargeLabel>
      </LargeButton>
      <Column>
        <Small icon={<ReplaceIcon />}>Reemplazar</Small>
        <Small icon={<GoToIcon />} menu>Ir a</Small>
        <Small icon={<CursorIcon />} menu>Seleccionar</Small>
      </Column>
    </RibbonGroup>
    <RibbonGroup title="Formato de texto" width={351} launcher>
      <TextFormat />
    </RibbonGroup>
  </Ribbon>
);

const Navigation = () => (
  <NavPane>
    <NavHeader>
      <NavTitle>Todos los objetos de Acc...</NavTitle>
      <NavToggle type="button" aria-label="Filtrar objetos">
        <Svg w={13} h={13}>
          <circle cx="6.500" cy="6.500" r="6" fill="#e8e9ec" stroke="#8a8a8a" />
          <path d="M3.500 5h6l-3 4z" fill="#555" />
        </Svg>
      </NavToggle>
      <NavToggle type="button" aria-label="Contraer panel" $ruled>
        <DoubleChevron left />
      </NavToggle>
    </NavHeader>
    <NavSearch>
      <SearchInput placeholder="Buscar..." aria-label="Buscar objetos" />
      <Magnifier />
    </NavSearch>
    {navGroups.map(({ title, Icon, items, selected }) => (
      <div key={title}>
        <NavGroupHeader type="button">
          {title}
          <DoubleChevron />
        </NavGroupHeader>
        <NavList>
          {items.map((item) => (
            <li key={item}>
              <NavItem href="#" $selected={item === selected}>
                <Icon />
                {item}
              </NavItem>
            </li>
          ))}
        </NavList>
      </div>
    ))}
  </NavPane>
);

const UserForm = () => {
  const keyRef = useRef(null);
  const [user, setUser] = useState({ clave: "2", nombre: "Israel jahdai", apellP: "Azpeita", apellidoM: "cardona" });
  const bind = (name) => ({
    id: name,
    value: user[name],
    onChange: (e) => setUser({ ...user, [name]: e.target.value }),
  });

  useEffect(() => {
    keyRef.current.focus();
    keyRef.current.select();
  }, []);

  return (
    <Fields>
      <FieldPair>
        <Field $gap={1} $pad="4px 0 0">
          <FieldLabel htmlFor="clave" $width={132} $height={20} $fill={LIME}>Clave de Usuario</FieldLabel>
          <KeyInput ref={keyRef} $width={148} $height={25} $fill={GREEN} {...bind("clave")} />
        </Field>
        <Field>
          <FieldLabel htmlFor="nombre" $width={168} $height={21} $fill={LIME}>Nombre</FieldLabel>
          <TextBox $width={221} $height={49} $fill={GREEN} {...bind("nombre")} />
        </Field>
      </FieldPair>
      <Field $gap={4}>
        <FieldLabel htmlFor="apellP" $width={239} $height={17} $fill={GREEN} $flush>Apell-P</FieldLabel>
        <TextBox $width={284} $height={46} $fill={GREEN} $flush {...bind("apellP")} />
      </Field>
      <Field $gap={8} $pad="16px 0 0">
        <FieldLabel htmlFor="apellidoM" $width={193} $height={13} $flush>Apellido-M</FieldLabel>
        <TextBox $width={574} $height={59} $flush {...bind("apellidoM")} />
      </Field>
      <Field $pad="39px 0 0 7px">
        <FieldLabel as="div" $width={574} $height={20}>Referencia</FieldLabel>
      </Field>
    </Fields>
  );
};

const RecordNavigation = () => (
  <RecordFooter>
    <RecordBar>
      <span>Registro:</span>
      <RecordButton type="button" aria-label="Primer registro" $width={21}>
        <Svg w={7} h={8}><path d="M.5 0v8" stroke="#333" strokeWidth="1.500" /><path d="M6.500 0v8L2 4z" fill="#333" /></Svg>
      </RecordButton>
      <RecordButton type="button" aria-label="Registro anterior" $width={14}>
        <Svg w={4} h={8}><path d="M4 0v8L0 4z" fill="#bbb" /></Svg>
      </RecordButton>
      <RecordInput $width={50} defaultValue="1 de 25" aria-label="Registro" />
      <RecordButton type="button" aria-label="Registro siguiente" $width={21}>
        <Svg w={4} h={8}><path d="M0 0v8l4-4z" fill="#333" /></Svg>
      </RecordButton>
      <RecordButton type="button" aria-label="Último registro" $width={15}>
        <Svg w={7} h={8}><path d="M6.500 0v8" stroke="#333" strokeWidth="1.500" /><path d="M0 0v8l4.500-4z" fill="#333" /></Svg>
      </RecordButton>
      <RecordButton type="button" aria-label="Nuevo registro" $width={17}>
        <Svg w={13} h={8}>
          <path d="M0 0v8l4-4z" fill="#333" />
          <path d="M9 0v8M5 4h8M6 1l6 6M12 1L6 7" stroke="#e9b21f" strokeWidth="1.500" />
        </Svg>
      </RecordButton>
      <FilterState type="button" disabled>
        <Svg w={15} h={13}>
          <path d="M1 1h11L8 6v6H5V6z" fill="#b5b5b5" stroke="#999" />
          <path d="M7 5l7 7M14 5l-7 7" stroke="#888" strokeWidth="1.500" />
        </Svg>
        Sin filtro
      </FilterState>
      <RecordInput $width={71} defaultValue="Buscar" aria-label="Buscar en registros" />
    </RecordBar>
  </RecordFooter>
);

const TrayIcons = () => (
  <>
    <TrayButton type="button" aria-label="Mostrar iconos ocultos">
      <Svg w={7} h={4}><path d="M0 4h7L3.500 0z" fill="#fff" /></Svg>
    </TrayButton>
    <TrayButton type="button" aria-label="Asistente">
      <Svg>
        <circle cx="8" cy="8" r="7" fill="#f2f2ea" stroke="#8d8d68" />
        <rect x="3" y="5" width="10" height="6" rx="3" fill="#fff" stroke="#777" />
        <path d="M5.500 7.500h1M9.500 7.500h1M6 9.500h4" stroke="#555" />
      </Svg>
    </TrayButton>
    <TrayButton type="button" aria-label="Gráficos">
      <Svg>
        <path d="M1.500 1.500h9v9h-9z" fill="#3f78dd" stroke="#a8c6f5" />
        <path d="M1 11h10v4H1z" fill="#dce6f7" />
        <path d="M3 12.500h1M6 12.500h1M9 12.500h1" stroke="#3f5f9f" />
        <path d="M10.500 4l5 5-5 5-4-5z" fill="#7ed05c" stroke="#f3e36b" />
      </Svg>
    </TrayButton>
    <TrayButton type="button" aria-label="Alerta">
      <Svg>
        <path d="M8 1l7 13H1z" fill="#e63a2b" stroke="#ff8b78" />
        <path d="M8 5v5M8 11.500v1.500" stroke="#fff" strokeWidth="2" />
      </Svg>
    </TrayButton>
    <TrayButton type="button" aria-label="Seguridad">
      <Svg>
        <path d="M8 1c2 1 4 1 6 1 0 7-1 11-6 13C3 13 2 9 2 2c2 0 4 0 6-1z" fill="#fff" />
        <path d="M8 1v7H2.500C2 6 2 5 2 2c2 0 4 0 6-1zM8 8h5.500C13 11 11 14 8 15z" fill="#e0352b" />
      </Svg>
    </TrayButton>
    <TrayButton type="button" aria-label="Satélite">
      <Svg>
        <circle cx="9" cy="9" r="3.500" fill="#e0352b" />
        <path d="M9 5l3-4M3 8l3 1" stroke="#d9d9d9" strokeWidth="1.500" />
        <circle cx="4" cy="12" r="2.500" fill="#c8ccd0" />
        <circle cx="14" cy="8" r="1.500" fill="#c8ccd0" />
        <circle cx="12" cy="13" r="1.500" fill="#c8ccd0" />
      </Svg>
    </TrayButton>
    <TrayButton type="button" aria-label="Sonido HD">
      <Svg>
        <rect x=".5" y=".5" width="15" height="15" fill="#3f5d62" stroke="#7e9c9a" />
        <path d="M8 12V3c1 2 4 2 3 6" stroke="#fff" strokeWidth="1.500" />
        <circle cx="6.500" cy="12" r="2" fill="#fff" />
      </Svg>
    </TrayButton>
    <TrayButton type="button" aria-label="Red">
      <Svg>
        <rect x="5.500" y="4.500" width="9" height="7" fill="#26404a" stroke="#fff" />
        <path d="M10 12v2M6 14.500h8M1.500 1v4h3V1M3 5v8h3" stroke="#fff" />
      </Svg>
    </TrayButton>
    <TrayButton type="button" aria-label="Volumen">
      <Svg>
        <path d="M1 6h3l4-4v12l-4-4H1z" fill="#fff" />
        <path d="M10 5.500c1.500 1.500 1.500 3.500 0 5M12 3.500c3 2.500 3 6.500 0 9" stroke="#fff" />
      </Svg>
    </TrayButton>
  </>
);

export default function App() {
  return (
    <Window>
      <GlobalStyle />
      <TitleBar>
        <QuickAccess>
          <AccessMark />
          <ThinRule />
          <QuickButton type="button" aria-label="Guardar"><SaveIcon /></QuickButton>
          <QuickButton type="button" aria-label="Deshacer"><UndoIcon /><Arrow color="#999" /></QuickButton>
          <QuickButton type="button" aria-label="Rehacer"><UndoIcon flip /><Arrow color="#999" /></QuickButton>
          <ThinRule />
          <QuickButton type="button" aria-label="Personalizar">
            <Svg w={7} h={7}><path d="M0 1h7" stroke="#000" /><path d="M0 3h7L3.500 7z" fill="#000" /></Svg>
          </QuickButton>
        </QuickAccess>
        <WindowTitle>
          {"maceira serrano perla Biblioteca : Base de datos (Access 2007 - 2010)  -  Microsoft Access"}
        </WindowTitle>
        <Caption>
          <CaptionButton type="button" aria-label="Minimizar">
            <Svg w={12} h={12}><rect x=".5" y="6.500" width="11" height="4" fill="#fff" stroke="#4b5566" /></Svg>
          </CaptionButton>
          <CaptionButton type="button" aria-label="Restaurar">
            <Svg w={12} h={12}>
              <path d="M3.500.500h8v8h-8z" fill="#fff" stroke="#4b5566" />
              <path d="M.5 3.500h8v8h-8z" fill="#fff" stroke="#4b5566" />
              <path d="M3.500 6.500h2v2h-2z" fill="#8da0b4" stroke="#4b5566" />
            </Svg>
          </CaptionButton>
          <CaptionButton type="button" aria-label="Cerrar" $close>
            <Svg w={12} h={10}>
              <path d="M2 1l8 8M10 1L2 9" stroke="#4b3a42" strokeWidth="4" />
              <path d="M2 1l8 8M10 1L2 9" stroke="#fff" strokeWidth="2.500" />
            </Svg>
          </CaptionButton>
        </Caption>
      </TitleBar>

      <TabStrip>
        <RibbonTab type="button" $kind="file"><TabText>Archivo</TabText></RibbonTab>
        <RibbonTab type="button" $kind="active"><TabText>Inicio</TabText></RibbonTab>
        <RibbonTab type="button"><TabText>Crear</TabText></RibbonTab>
        <RibbonTab type="button"><TabText>Datos externos</TabText></RibbonTab>
        <RibbonTab type="button"><TabText>Herramientas de base de datos</TabText></RibbonTab>
        <StripEnd>
          <button type="button" aria-label="Minimizar la cinta">
            <Svg w={9} h={8}><path d="M.5 4.500l4-3.500 4 3.500v2h-2l-2-2-2 2h-2z" fill="#fff" stroke="#444" /></Svg>
          </button>
          <HelpButton type="button">?</HelpButton>
        </StripEnd>
      </TabStrip>
      <AccessRibbon />

      <WorkArea>
        <Navigation />
        <Splitter />
        <Document>
          <DocTabs>
            {docTabs.map(({ title, Icon, width, active }, i) => (
              <DocTab key={i} type="button" $width={width} $active={active} $order={4 - i}>
                <Icon />
                {title}
              </DocTab>
            ))}
            <CloseDocument type="button" aria-label="Cerrar formulario"><CrossIcon /></CloseDocument>
          </DocTabs>
          <FormView>
            <FormColumn>
              <FormHeader>
                <SchoolCrest />
                <FormTitles>
                  <FormTitle $indent>biblioteca - cetis 77</FormTitle>
                  <FormTitle>captura Usuarios</FormTitle>
                </FormTitles>
                <DgetiLogo />
              </FormHeader>
              <Detail>
                <RecordSelector>
                  <Svg w={6} h={11}><path d="M0 0v11l6-5.500z" fill="#000" /></Svg>
                </RecordSelector>
                <UserForm />
              </Detail>
            </FormColumn>
            <ScrollBar>
              <ScrollButton type="button" aria-label="Subir">
                <Svg w={9} h={5}><path d="M0 5h9L4.500 0z" fill="#3f4f7c" /></Svg>
              </ScrollButton>
              <ScrollButton type="button" aria-label="Desplazar" $height={109}>
                <Svg w={8} h={7}><path d="M0 .5h8M0 2.500h8M0 4.500h8M0 6.500h8" stroke="#888" /></Svg>
              </ScrollButton>
              <ScrollButton type="button" aria-label="Bajar" $last>
                <Svg w={9} h={5}><path d="M0 0h9L4.500 5z" fill="#3f4f7c" /></Svg>
              </ScrollButton>
            </ScrollBar>
          </FormView>
          <RecordNavigation />
        </Document>
      </WorkArea>

      <StatusBar>
        <StatusText>Identificacion digital del usuario</StatusText>
        <StatusRight>
          <span>Bloq Num</span>
          <ViewRule />
          <ViewButton type="button" aria-label="Vista Formulario" $active>
            <Svg w={12} h={10}>
              <path d="M.5.500h11v9H.500z" fill="#fff" stroke="#444" />
              <path d="M0 1.500h12M2 4.500h3M2 7.500h3M7 4.500h3M7 7.500h3" stroke="#444" />
            </Svg>
          </ViewButton>
          <ViewButton type="button" aria-label="Vista Presentación">
            <Svg w={11} h={11}>
              <path d="M1.500 1.500h8v8h-8zM0 1.500h11M0 9.500h11M4 4.500h2M4 6.500h3" stroke="#444" />
            </Svg>
          </ViewButton>
          <ViewButton type="button" aria-label="Vista Diseño">
            <Svg w={12} h={11}>
              <path d="M.500 2v8.500h9zM11 1L5 7" fill="#777" stroke="#444" strokeWidth="1.300" />
            </Svg>
          </ViewButton>
        </StatusRight>
      </StatusBar>

      <Taskbar>
        <Landscape />
        <TaskList>
          <StartButton type="button" aria-label="Inicio"><StartOrb /></StartButton>
          <TaskButton type="button" aria-label="Internet Explorer"><ExplorerIcon /></TaskButton>
          <TaskButton type="button" aria-label="Explorador" $state="open"><FolderIcon /></TaskButton>
          <TaskButton type="button" aria-label="Reproductor"><PlayerIcon /></TaskButton>
          <TaskButton type="button" aria-label="Chrome" $state="open"><ChromeIcon /></TaskButton>
          <TaskButton type="button" aria-label="Firefox"><FirefoxIcon /></TaskButton>
          <TaskButton type="button" aria-label="Access" $state="active"><AccessTaskIcon /></TaskButton>
        </TaskList>
        <Tray>
          <Language type="button">ES</Language>
          <TrayIcons />
          <Clock type="button">04:57 p.m.<br />18/03/2016</Clock>
          <ShowDesktop type="button" aria-label="Mostrar escritorio" />
        </Tray>
      </Taskbar>
    </Window>
  );
}
